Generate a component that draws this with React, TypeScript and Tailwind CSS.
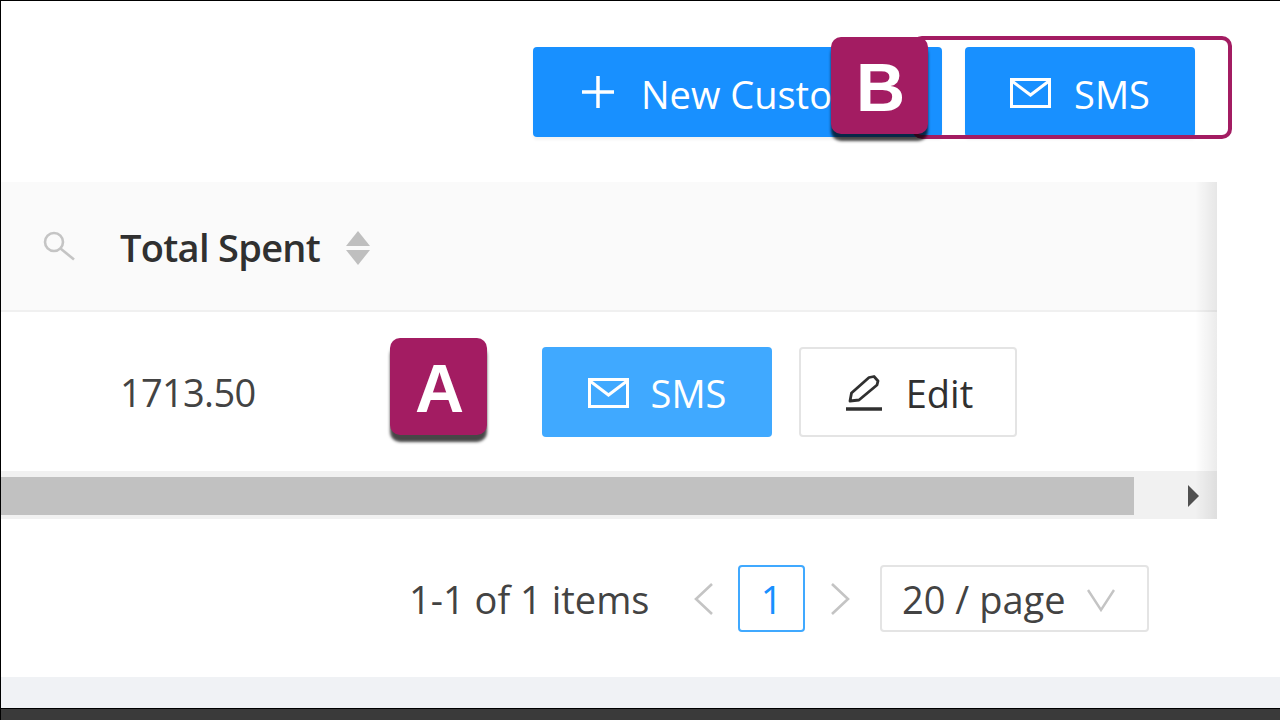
const font = "font-['Open_Sans','Noto_Sans',sans-serif]";

// envelope, thin square outline as in the reference
function MailIcon() {
  return (
    <svg width="41" height="30" viewBox="0 0 41 30" fill="none" stroke="currentColor" strokeWidth="3" className="mt-[2px] shrink-0">
      <rect x="1.5" y="1.5" width="38" height="27" />
      <path d="M2 3 L20.5 17 L39 3" />
    </svg>
  );
}

function PencilIcon() {
  return (
    <svg width="37" height="36" viewBox="0 0 37 36" fill="none" stroke="#303030" strokeWidth="2.8" className="mt-[3px] shrink-0">
      <path d="M5 26 L6.5 18 L24 2.5 L29 1.5 L33 6 L32 10 L14 25 Z" strokeLinejoin="round" />
      <path d="M1 34 H37" strokeWidth="3.4" />
    </svg>
  );
}

function Chevron({ d, className }: { d: string; className: string }) {
  return (
    <svg width="22" height="34" viewBox="0 0 22 34" fill="none" stroke="#c4c4c4" strokeWidth="2.6" className={`shrink-0 ${className}`}>
      <path d={d} />
    </svg>
  );
}

function Badge({ label, className }: { label: string; className: string }) {
  return (
    <div
      className={`absolute z-20 flex h-[97px] w-[97px] items-center justify-center rounded-[10px] bg-[#a31c62] pl-[2px] pt-[3px] text-[68px] font-bold leading-none text-white shadow-[0_7px_3px_rgba(0,0,0,0.72)] font-['Liberation_Sans',sans-serif] ${className}`}
    >
      {label}
    </div>
  );
}

export default function App() {
  return (
    <div className={`relative flex h-[720px] w-[1280px] flex-col overflow-hidden border-l border-t border-black bg-white ${font}`}>
      {/* toolbar */}
      <div className="flex h-[181px] shrink-0 justify-end gap-[23px] pr-[85px] pt-[46px]">
        <div className="flex h-[90px] w-[409px] items-center gap-[26px] overflow-hidden rounded-[4px] bg-[#1890ff] pl-[48px] text-[38px] text-white shadow-[0_3px_3px_rgba(0,0,0,0.05)]">
          <svg width="34" height="34" viewBox="0 0 34 34" stroke="currentColor" strokeWidth="3.5" className="shrink-0">
            <path d="M17 1 V33 M1 17 H33" />
          </svg>
          <span className="whitespace-nowrap pt-[4px]">New Customer</span>
        </div>
        <div className="flex h-[90px] w-[230px] items-center justify-center gap-[23px] rounded-[4px] bg-[#1890ff] text-[38px] text-white shadow-[0_3px_3px_rgba(0,0,0,0.05)]">
          <MailIcon />
          <span className="pt-[4px]">SMS</span>
        </div>
      </div>

      {/* table */}
      <div className="relative w-[1216px] shrink-0">
        <div className="flex h-[130px] items-center border-b-2 border-[#f0f0f0] bg-[#fafafa] pl-[42px]">
          <svg width="32" height="30" viewBox="0 0 32 30" fill="none" stroke="#c4c4c4" strokeWidth="2.6" className="shrink-0">
            <circle cx="11" cy="11" r="9" />
            <path d="M17.5 17.5 L31 28.5" />
          </svg>
          <span className="ml-[45px] pt-[3px] text-[38px] font-semibold tracking-[-0.7px] text-[#303030]">Total Spent</span>
          <div className="ml-[26px] mt-[3px] flex flex-col gap-[4px]">
            <div className="h-0 w-0 border-x-[12px] border-b-[15px] border-x-transparent border-b-[#bfbfbf]" />
            <div className="h-0 w-0 border-x-[12px] border-t-[15px] border-x-transparent border-t-[#bfbfbf]" />
          </div>
        </div>

        <div className="flex h-[159px] items-center pl-[119px]">
          <span className="w-[422px] pt-[2px] text-[38px] tracking-[-0.7px] text-[#434343]">1713.50</span>
          <div className="flex h-[90px] w-[230px] items-center justify-center gap-[22px] rounded-[4px] bg-[#40a9ff] text-[38px] text-white">
            <MailIcon />
            <span className="pt-[3px]">SMS</span>
          </div>
          <div className="ml-[27px] flex h-[90px] w-[218px] items-center justify-center gap-[24px] rounded-[4px] border-2 border-[#e4e4e4] bg-white pl-[2px] text-[38px] text-[#303030]">
            <PencilIcon />
            <span className="pt-[3px]">Edit</span>
          </div>
        </div>

        {/* scrollbar */}
        <div className="flex h-[48px] items-center justify-between bg-[#f1f1f1] pr-[18px] pt-[2px]">
          <div className="h-[38px] w-[1133px] bg-[#c1c1c1]" />
          <div className="h-0 w-0 border-y-[11px] border-l-[11px] border-y-transparent border-l-[#505050]" />
        </div>

        {/* fixed column shadow */}
        <div className="absolute bottom-0 right-0 top-0 w-[22px] bg-gradient-to-r from-transparent to-[rgba(0,0,0,0.08)]" />
      </div>

      {/* pagination */}
      <div className="flex h-[158px] shrink-0 items-start pl-[408px] pt-[46px]">
        <span className="flex h-[67px] w-[284px] items-center whitespace-nowrap pt-[2px] text-[38px] text-[#434343]">1-1 of 1 items</span>
        <Chevron d="M19 2 L3 17 L19 32" className="mt-[17px]" />
        <div className="ml-[23px] flex h-[67px] w-[67px] items-center justify-center rounded-[4px] border-2 border-[#40a9ff] pt-[2px] text-[38px] text-[#1890ff]">1</div>
        <Chevron d="M3 2 L19 17 L3 32" className="ml-[24px] mt-[17px]" />
        <div className="ml-[29px] flex h-[67px] w-[269px] items-center justify-between rounded-[4px] border-2 border-[#e4e4e4] pl-[20px] pr-[32px] pt-[2px] text-[38px] text-[#434343]">
          <span className="whitespace-nowrap">20 / page</span>
          <svg width="28" height="24" viewBox="0 0 28 24" fill="none" stroke="#c4c4c4" strokeWidth="2.4" className="shrink-0">
            <path d="M1 2 L14 22 L27 2" />
          </svg>
        </div>
      </div>

      <div className="h-[31px] shrink-0 bg-[#f0f2f5]" />
      <div className="flex-1 border-t border-black bg-[#3a3a3a]" />

      {/* callouts */}
      <div className="absolute left-[911px] top-[35px] z-10 h-[103px] w-[320px] rounded-[10px] border-4 border-[#a31c62]" />
      <Badge label="A" className="left-[389px] top-[337px]" />
      <Badge label="B" className="left-[830px] top-[36px]" />
    </div>
  );
}
